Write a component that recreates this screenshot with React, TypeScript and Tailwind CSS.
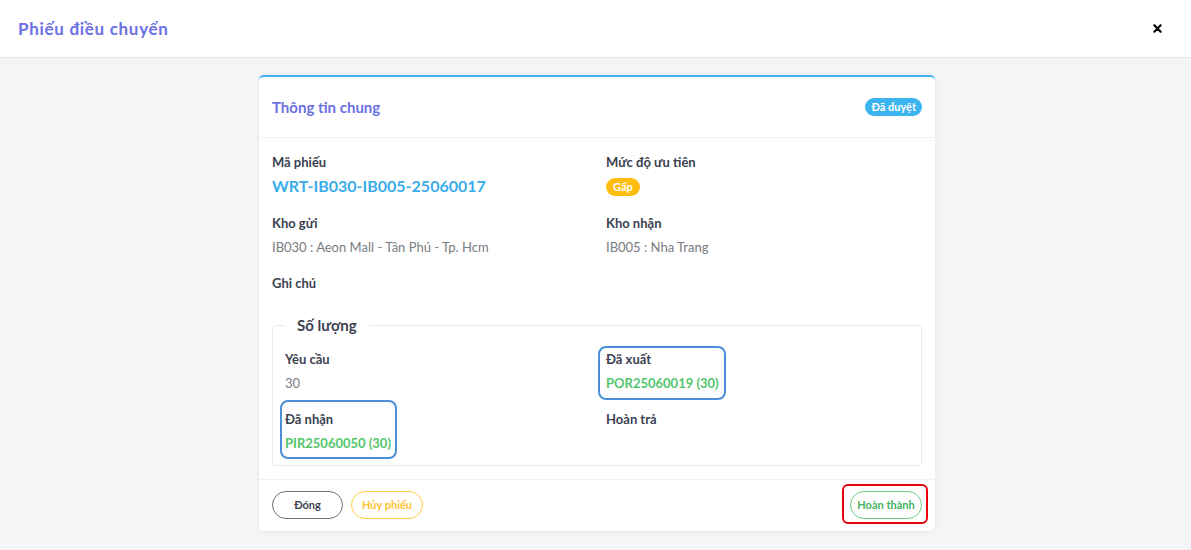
import React from 'react';

function Field({ label, children }: { label: string; children?: React.ReactNode }) {
  return (
    <div className="flex flex-col">
      <div className="text-[13px] leading-5 font-bold text-[#3b4150]">{label}</div>
      <div className="mt-1 min-h-5 text-[13px] leading-5">{children}</div>
    </div>
  );
}

// blue highlight ring drawn over a field
function Ring({ children, className }: { children: React.ReactNode; className: string }) {
  return (
    <div className="relative w-fit">
      {children}
      <span className={'pointer-events-none absolute rounded-lg border-2 border-[#4a8fd8] ' + className} />
    </div>
  );
}

export default function App() {
  return (
    <div className="w-[1191px] h-[550px] bg-[#f4f5f6] font-['Lato',sans-serif] overflow-hidden">
      <div className="h-[58px] bg-white border-b border-[#e3e4e6] flex items-center justify-between pl-[18px] pr-[29px]">
        <h1 className="text-[17px] font-bold tracking-[0.7px] text-[#6b70e3]">Phiếu điều chuyển</h1>
        <svg width="9" height="9" viewBox="0 0 10 10" className="text-black">
          <path d="M1.5 1.5 L8.5 8.5 M8.5 1.5 L1.5 8.5" stroke="currentColor" strokeWidth="2.4" strokeLinecap="round" />
        </svg>
      </div>

      <div className="flex justify-center pt-[17px]">
        <div className="w-[676px] ml-[3px] bg-white rounded-[5px] border-t-2 border-[#3eb2ef] shadow-[0_1px_6px_rgba(0,0,0,0.06)]">
          <div className="h-[61px] px-[13px] flex items-center justify-between border-b border-[#f1f2f4]">
            <h2 className="text-[15px] font-bold text-[#6b70e3]">Thông tin chung</h2>
            <span className="h-[18px] px-[6px] rounded-full bg-[#3cb4ef] text-white text-[11px] font-bold flex items-center">Đã duyệt</span>
          </div>

          <div className="px-[13px] pt-[14px] pb-[13px]">
            <div className="grid grid-cols-[334px_1fr] gap-y-4">
              <Field label="Mã phiếu">
                <span className="text-[16px] font-bold text-[#3aacea]">WRT-IB030-IB005-25060017</span>
              </Field>
              <Field label="Mức độ ưu tiên">
                <span className="inline-flex items-center h-[18px] px-[7px] rounded-full bg-[#ffbe0d] text-white text-[11px] font-bold">Gấp</span>
              </Field>
              <Field label="Kho gửi">
                <span className="text-[#787c83]">IB030 : Aeon Mall - Tân Phú - Tp. Hcm</span>
              </Field>
              <Field label="Kho nhận">
                <span className="text-[#787c83]">IB005 : Nha Trang</span>
              </Field>
              <div className="col-span-2 h-[25px] text-[13px] leading-5 font-bold text-[#3b4150]">Ghi chú</div>
            </div>

            <fieldset className="mt-[16px] border border-[#e8e9f1] rounded-[4px] px-[12px] pb-[12px]">
              <legend className="px-[12px] text-[15px] leading-[22px] font-bold text-[#3b4150]">Số lượng</legend>
              <div className="grid grid-cols-[321px_1fr] gap-y-4 pt-[13px]">
                <Field label="Yêu cầu">
                  <span className="text-[#787c83]">30</span>
                </Field>
                <Ring className="-left-[8px] -right-[7px] -top-[3px] -bottom-[7px]">
                  <Field label="Đã xuất">
                    <span className="font-bold text-[#53c66b]">POR25060019 (30)</span>
                  </Field>
                </Ring>
                <Ring className="-left-[5px] -right-[6px] -top-[9px] -bottom-[6px]">
                  <Field label="Đã nhận">
                    <span className="font-bold text-[#53c66b]">PIR25060050 (30)</span>
                  </Field>
                </Ring>
                <Field label="Hoàn trả" />
              </div>
            </fieldset>
          </div>

          <div className="border-t border-[#f1f2f4] px-[13px] pt-[11px] pb-[12px] flex items-center justify-between">
            <div className="flex gap-2">
              <button className="h-[28px] w-[71px] rounded-full border border-[#6c7178] text-[11px] font-bold text-[#3b4150]">Đóng</button>
              <button className="h-[28px] w-[72px] rounded-full border border-[#ffcd45] text-[11px] font-bold text-[#ffc230]">Hủy phiếu</button>
            </div>
            <div className="relative">
              <button className="h-[28px] w-[72px] rounded-full border border-[#6ecb85] text-[11px] font-bold text-[#43b25e]">Hoàn thành</button>
              <span className="pointer-events-none absolute -left-[8px] -top-[7px] w-[86px] h-[40px] rounded-[6px] border-2 border-[#e8000b]" />
            </div>
          </div>
        </div>
      </div>
    </div>
  );
}
